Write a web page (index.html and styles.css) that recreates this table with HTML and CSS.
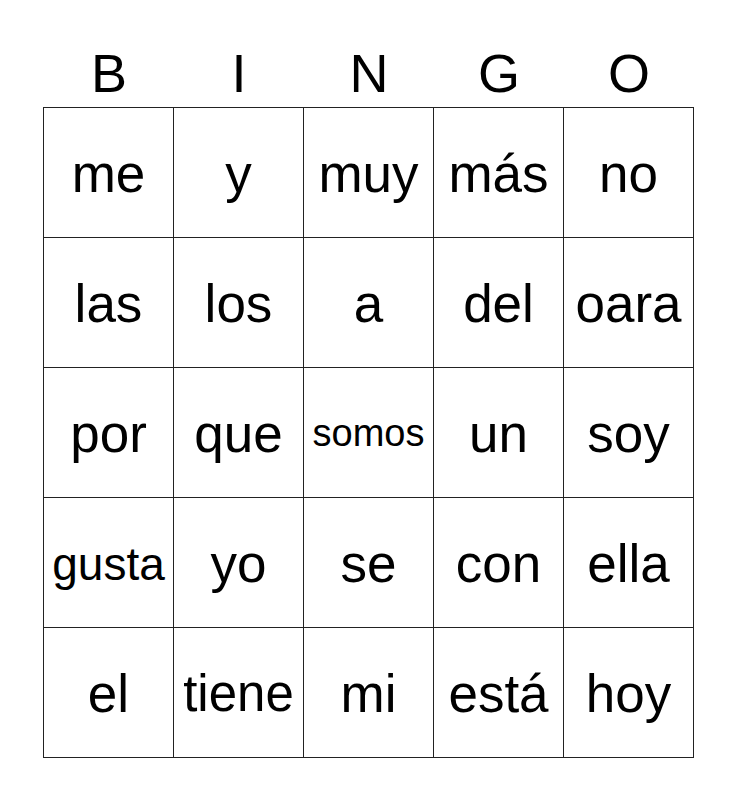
FILE: index.html
```html
<!DOCTYPE html>
<html lang="es">
<head>
<meta charset="utf-8">
<title>Bingo</title>
<link rel="stylesheet" href="styles.css">
</head>
<body>
<div class="card">
  <div class="header">
    <div class="letter">B</div>
    <div class="letter">I</div>
    <div class="letter">N</div>
    <div class="letter">G</div>
    <div class="letter">O</div>
  </div>
  <div class="grid">
    <div class="cell">me</div>
    <div class="cell">y</div>
    <div class="cell">muy</div>
    <div class="cell">más</div>
    <div class="cell">no</div>
    <div class="cell">las</div>
    <div class="cell">los</div>
    <div class="cell">a</div>
    <div class="cell">del</div>
    <div class="cell">oara</div>
    <div class="cell">por</div>
    <div class="cell">que</div>
    <div class="cell fit-xs">somos</div>
    <div class="cell">un</div>
    <div class="cell">soy</div>
    <div class="cell fit-s">gusta</div>
    <div class="cell">yo</div>
    <div class="cell">se</div>
    <div class="cell">con</div>
    <div class="cell">ella</div>
    <div class="cell">el</div>
    <div class="cell fit-m">tiene</div>
    <div class="cell">mi</div>
    <div class="cell">está</div>
    <div class="cell">hoy</div>
  </div>
</div>
</body>
</html>
```
FILE: styles.css
```css
html, body {
  margin: 0;
  padding: 0;
  background: #ffffff;
}
body {
  font-family: "Liberation Sans", Arial, sans-serif;
  color: #000000;
}
.card {
  width: 651px;
  padding-top: 39px;
  margin-left: 43px;
}
.header {
  display: grid;
  grid-template-columns: repeat(5, 130px);
  padding-left: 1px;
  height: 68px;
}
.letter {
  display: flex;
  align-items: center;
  justify-content: center;
  font-size: 54px;
  line-height: 1;
}
.grid {
  display: grid;
  grid-template-columns: repeat(5, 130px);
  grid-auto-rows: 130px;
  border-left: 1px solid #222222;
  border-top: 1px solid #222222;
}
.cell {
  display: flex;
  align-items: center;
  justify-content: center;
  padding-top: 2px;
  border-right: 1px solid #222222;
  border-bottom: 1px solid #222222;
  font-size: 53px;
  white-space: nowrap;
  overflow: hidden;
}
.fit-m { font-size: 51px; }
.fit-s { font-size: 46px; }
.fit-xs { font-size: 38px; }
```
